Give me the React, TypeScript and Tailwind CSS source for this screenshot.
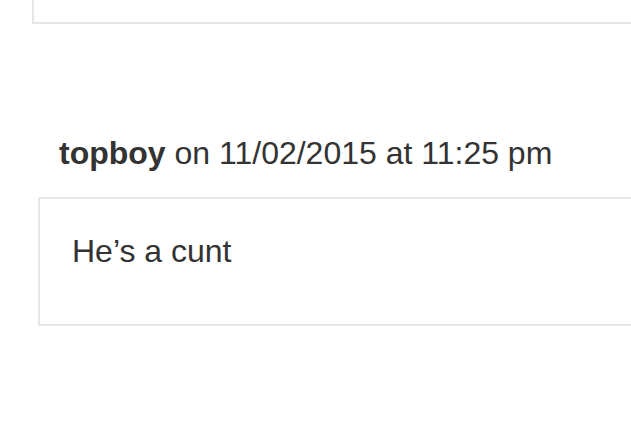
import React from 'react';

export default function App() {
  return (
    <div className="h-[421px] w-[631px] overflow-hidden bg-white font-['Liberation_Sans',Arial,sans-serif] text-[#333]">
      {/* Previous comment body, cut off at the top */}
      <div className="ml-[32px] h-[24px] border-b-2 border-l-2 border-[#e6e6e6]" />

      {/* Comment meta */}
      <div className="ml-[59px] mt-[111px] text-[32px] leading-[36px] whitespace-nowrap">
        <span className="font-bold">topboy</span> on 11/02/2015 at 11:25 pm
      </div>

      {/* Comment body */}
      <div className="ml-[38px] mt-[26px] box-border h-[129px] border-2 border-r-0 border-[#e6e6e6] pl-[32px] pt-[34px]">
        <p className="text-[32px] leading-[36px] whitespace-nowrap">He’s a cunt</p>
      </div>
    </div>
  );
}
